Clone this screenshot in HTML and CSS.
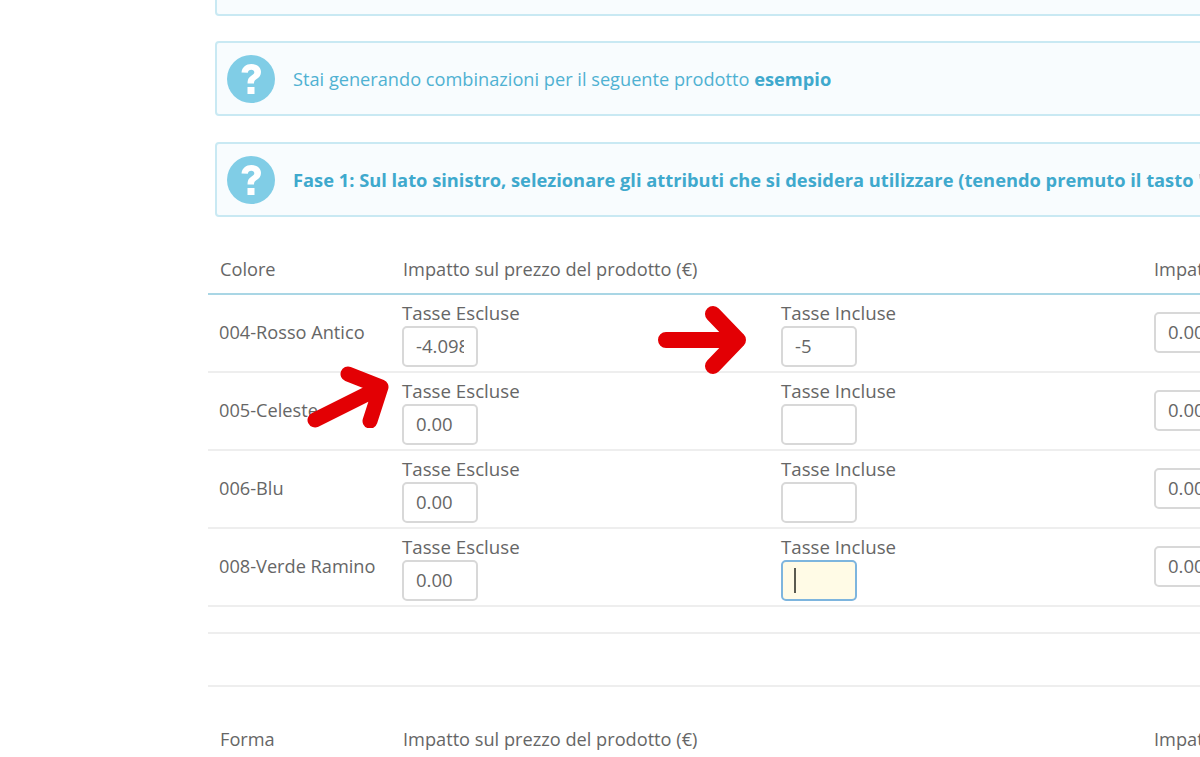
FILE: index.html
```html
<!DOCTYPE html>
<html lang="it">
<head>
<meta charset="utf-8">
<title>Combinazioni</title>
<link rel="stylesheet" href="styles.css">
</head>
<body>
<main class="page">
  <div class="alert alert-top"></div>
  <div class="alert">
    <svg class="help" viewBox="0 0 48 48" aria-hidden="true"><circle cx="24" cy="24" r="24" fill="#80cde6"/><path d="M14.5 17.5c.6-5.5 4.6-8.5 9.8-8.5 5.600 0 9.700 3.200 9.700 8 0 3.400-1.800 5.300-4.400 7-2.100 1.400-2.600 2.200-2.600 4.500h-6.500c0-4 1-5.900 3.800-7.800 2-1.300 3-2.200 3-3.500 0-1.500-1.200-2.500-3-2.500-2 0-3.200 1.200-3.500 3.100z" fill="#fff"/><rect x="20.500" y="32" width="7" height="7" fill="#fff"/></svg>
    <p class="alert-text">Stai generando combinazioni per il seguente prodotto <strong>esempio</strong></p>
  </div>
  <div class="alert">
    <svg class="help" viewBox="0 0 48 48" aria-hidden="true"><circle cx="24" cy="24" r="24" fill="#80cde6"/><path d="M14.5 17.5c.6-5.5 4.6-8.5 9.8-8.5 5.600 0 9.700 3.200 9.700 8 0 3.400-1.800 5.300-4.400 7-2.100 1.400-2.600 2.200-2.600 4.500h-6.500c0-4 1-5.900 3.800-7.800 2-1.300 3-2.200 3-3.500 0-1.500-1.200-2.500-3-2.500-2 0-3.200 1.200-3.500 3.100z" fill="#fff"/><rect x="20.500" y="32" width="7" height="7" fill="#fff"/></svg>
    <p class="alert-text"><strong>Fase 1: Sul lato sinistro, selezionare gli attributi che si desidera utilizzare (tenendo premuto il tasto "Ctrl")</strong></p>
  </div>

  <section class="table">
    <div class="row head">
      <div class="cell-head">Colore</div>
      <div class="span-2">Impatto sul prezzo del prodotto (€)</div>
      <div>Impatto sul peso</div>
    </div>

    <div class="row">
      <div class="cell-name">004-Rosso Antico</div>
      <label class="field">Tasse Escluse<input class="input" value="-4.0983"></label>
      <label class="field">Tasse Incluse<input class="input" value="-5"></label>
      <input class="input input-far" value="0.00">
    </div>
    <div class="row">
      <div class="cell-name">005-Celeste</div>
      <label class="field">Tasse Escluse<input class="input" value="0.00"></label>
      <label class="field">Tasse Incluse<input class="input" value=""></label>
      <input class="input input-far" value="0.00">
    </div>
    <div class="row">
      <div class="cell-name">006-Blu</div>
      <label class="field">Tasse Escluse<input class="input" value="0.00"></label>
      <label class="field">Tasse Incluse<input class="input" value=""></label>
      <input class="input input-far" value="0.00">
    </div>
    <div class="row">
      <div class="cell-name">008-Verde Ramino</div>
      <label class="field">Tasse Escluse<input class="input" value="0.00"></label>
      <label class="field">Tasse Incluse<span class="focus-wrap"><input class="input input-focus" value=""><span class="caret"></span></span></label>
      <input class="input input-far" value="0.00">
    </div>

    <div class="spacer-row small"></div>
    <div class="spacer-row large"></div>

    <div class="row head head-bottom">
      <div class="cell-head">Forma</div>
      <div class="span-2">Impatto sul prezzo del prodotto (€)</div>
      <div>Impatto sul peso</div>
    </div>
  </section>

  <svg class="arrow arrow-right" viewBox="0 0 92 72" aria-hidden="true"><path d="M10 36H82M57 10L82 36L57 62" fill="none" stroke="#e30004" stroke-width="16" stroke-linecap="round" stroke-linejoin="round"/></svg>
  <svg class="arrow arrow-diag" viewBox="0 0 84 62" aria-hidden="true"><path d="M9 54L75 21M42 8L75 21L64 55" fill="none" stroke="#e30004" stroke-width="15" stroke-linecap="round" stroke-linejoin="round"/></svg>
</main>
</body>
</html>
```
FILE: styles.css
```css
* { box-sizing: border-box; }

html, body {
  margin: 0;
  height: 757px;
  overflow: hidden;
  background: #fff;
}

body {
  font-family: "Open Sans", "Liberation Sans", sans-serif;
  font-size: 18.2px;
  color: #666;
}

.page {
  position: relative;
  width: 1200px;
  height: 757px;
  overflow: hidden;
  padding-left: 208px;
}

.alert {
  display: flex;
  align-items: center;
  gap: 18px;
  width: 1100px;
  height: 75px;
  margin: 0 0 26px 7px;
  padding-left: 10px;
  background: #f8fcfe;
  border: 2px solid #c9e9f3;
  border-radius: 4px;
  color: #4fb1d2;
  white-space: nowrap;
}

.alert-top {
  height: 16px;
  margin-bottom: 25px;
  border-top: 0;
  border-radius: 0 0 4px 4px;
}

.alert-text { margin: 0; }
.alert-text strong { color: #3fa9cd; font-weight: 700; font-size: 18.3px; }

.help {
  width: 48px;
  height: 48px;
  flex: none;
}

.table {
  width: 1100px;
  margin-top: 26px;
}

.row {
  display: grid;
  grid-template-columns: 194px 379px 373px 1fr;
  align-items: center;
  height: 78px;
  border-bottom: 2px solid #eee;
}

.head {
  height: 52px;
  border-bottom: 2px solid #a9d6e5;
  padding-top: 1px;
  color: #666;
  white-space: nowrap;
}

.cell-head { padding-left: 12px; }
.head .span-2 { grid-column: span 2; padding-left: 1px; }

.head-bottom {
  border-bottom: 0;
  height: 106px;
  padding-top: 0;
  padding-bottom: 2px;
}

.cell-name {
  padding-left: 11px;
  margin-top: -3px;
  font-size: 18.2px;
}

.field {
  display: flex;
  flex-direction: column;
  font-size: 18.7px;
  line-height: 26px;
  margin-top: 1px;
  white-space: nowrap;
}

.input {
  display: block;
  width: 76px;
  height: 41px;
  padding: 0 12px 2px;
  border: 2px solid #d8d8d8;
  border-radius: 5px;
  background: #fff;
  font-family: inherit;
  font-size: 18.5px;
  color: #666;
  outline: none;
}

.input-far { margin-top: -1px; }

.input-focus {
  background: #fffbe6;
  border-color: #7db5de;
}

.focus-wrap {
  position: relative;
  display: block;
  width: 76px;
}

.caret {
  position: absolute;
  left: 13px;
  top: 8px;
  width: 2px;
  height: 25px;
  background: #5a5a50;
}

.spacer-row { border-bottom: 2px solid #eee; }
.spacer-row.small { height: 27px; }
.spacer-row.large { height: 53px; }

.arrow { position: absolute; }
.arrow-right { left: 656px; top: 304px; width: 92px; height: 72px; }
.arrow-diag { left: 306px; top: 366px; width: 84px; height: 62px; }
```
